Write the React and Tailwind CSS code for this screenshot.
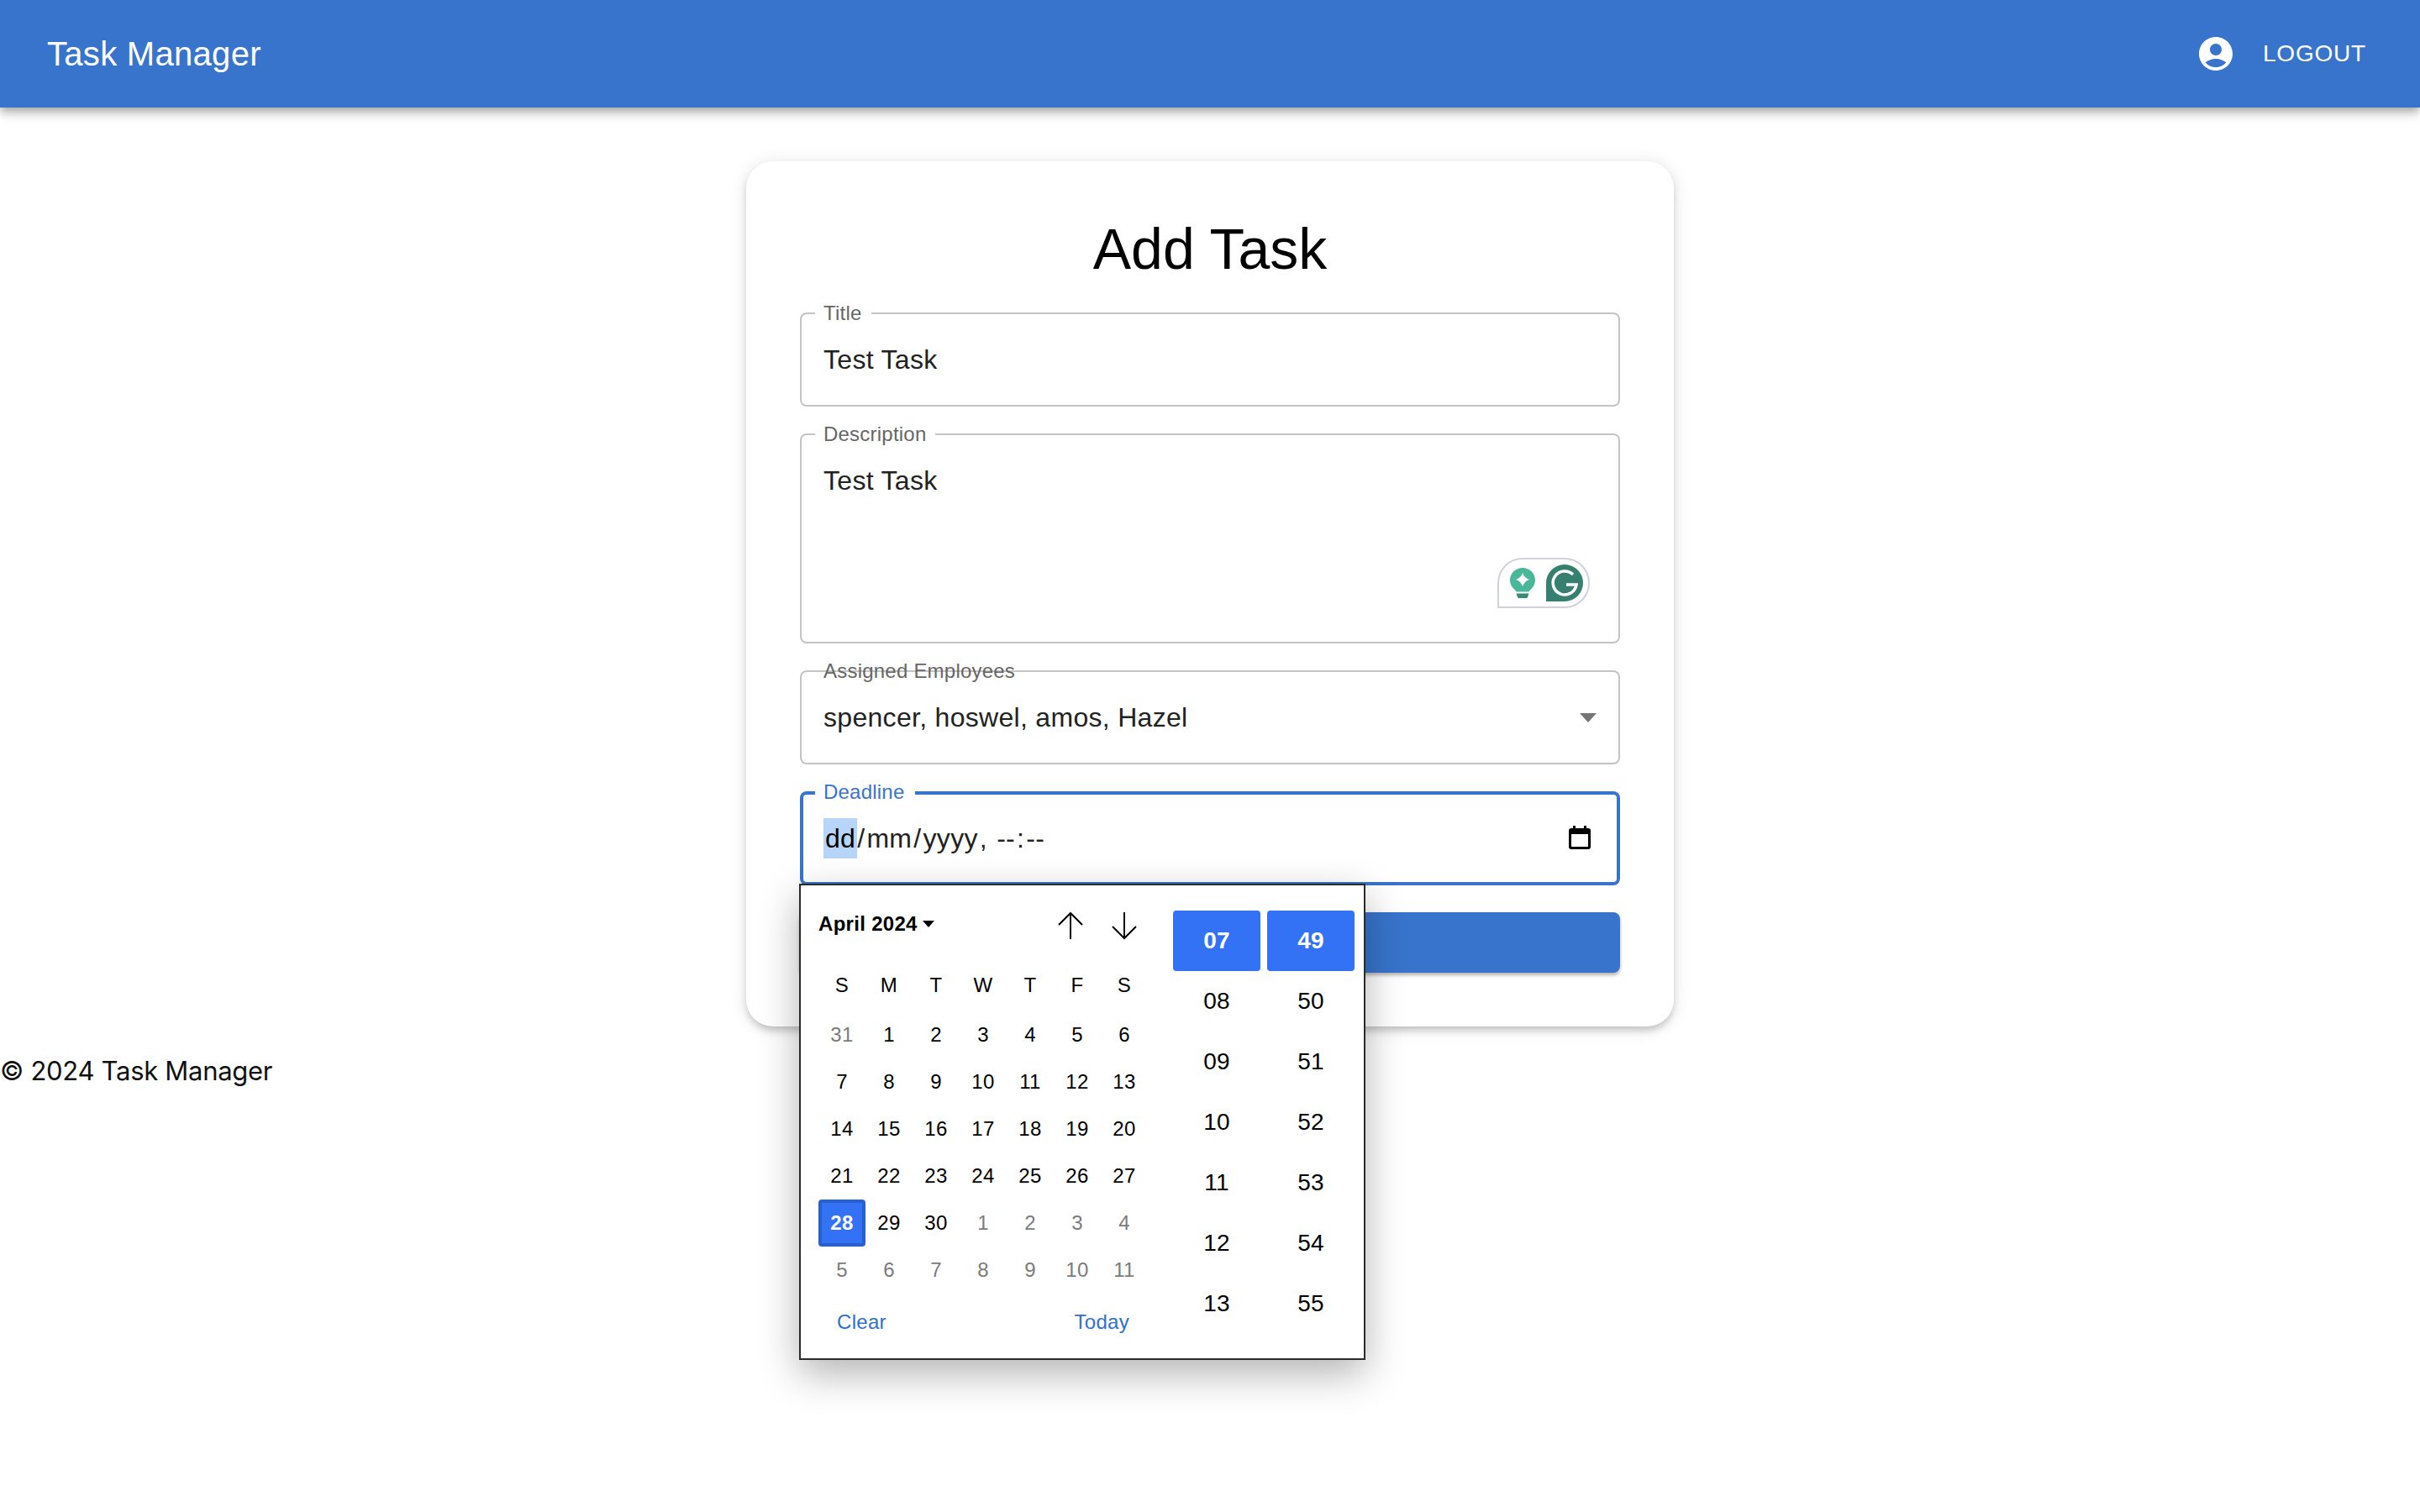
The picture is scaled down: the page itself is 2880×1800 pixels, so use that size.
const calendarRows = [
  [["31", true], ["1"], ["2"], ["3"], ["4"], ["5"], ["6"]],
  [["7"], ["8"], ["9"], ["10"], ["11"], ["12"], ["13"]],
  [["14"], ["15"], ["16"], ["17"], ["18"], ["19"], ["20"]],
  [["21"], ["22"], ["23"], ["24"], ["25"], ["26"], ["27"]],
  [["28"], ["29"], ["30"], ["1", true], ["2", true], ["3", true], ["4", true]],
  [["5", true], ["6", true], ["7", true], ["8", true], ["9", true], ["10", true], ["11", true]],
];

const weekDays = ["S", "M", "T", "W", "T", "F", "S"];
const hours = ["07", "08", "09", "10", "11", "12", "13"];
const minutes = ["49", "50", "51", "52", "53", "54", "55"];

function AccountIcon() {
  return (
    <svg viewBox="0 0 24 24" className="h-12 w-12 fill-white">
      <path d="M12 2C6.48 2 2 6.48 2 12s4.48 10 10 10 10-4.48 10-10S17.52 2 12 2zm0 4c1.93 0 3.5 1.57 3.5 3.5S13.93 13 12 13s-3.5-1.57-3.5-3.5S10.07 6 12 6zm0 14c-2.03 0-4.43-.82-6.14-2.88C7.55 15.8 9.68 15 12 15s4.45.8 6.14 2.12C16.43 19.18 14.03 20 12 20z" />
    </svg>
  );
}

function GrammarlyBadge() {
  return (
    <div className="absolute bottom-[40px] right-[34px] flex h-[60px] w-[110px] items-center rounded-[30px] rounded-bl-none border-2 border-[#cfd1e0] bg-white pl-[13px]">
      <svg viewBox="0 0 30 36" className="h-[36px] w-[30px]">
        <path d="M15 0C6.7 0 0 6.5 0 14.6c0 5 2.6 9 6 11.8.8.7 1.2 1.2 1.4 2h15.2c.2-.8.6-1.3 1.4-2 3.4-2.8 6-6.8 6-11.800C30 6.500 23.300 0 15 0z" fill="#4ab79b" />
        <path d="M15 6Q17 12 23 14 17 16 15 22 13 16 7 14 13 12 15 6z" fill="#fff" />
        <path d="M7.500 30.500h15l-1.500 4.500a1.500 1.500 0 0 1-1.400 1H10.400a1.500 1.500 0 0 1-1.400-1z" fill="#3b8a76" />
      </svg>
      <svg viewBox="0 0 44 44" className="ml-[13px] h-[44px] w-[44px]">
        <path d="M22 0a22 22 0 0 1 0 44H0V22A22 22 0 0 1 22 0z" fill="#377f6f" />
        <path d="M32 12A14 14 0 1 0 36 24H24" fill="none" stroke="#fff" strokeWidth="3.500" />
      </svg>
    </div>
  );
}

function OutlinedField({ label, className, children }) {
  return (
    <div className={`relative rounded-lg border-2 border-[#c4c4c4] ${className}`}>
      <span className="absolute left-[16px] top-[-17px] bg-white pl-[10px] pr-[11px] text-[24px] leading-[32px] tracking-[0.22px] text-[#666666]">
        {label}
      </span>
      {children}
    </div>
  );
}

function CalendarPopup() {
  return (
    <div className="absolute left-[-5px] top-[106px] z-10 flex h-[567px] w-[674px] border-2 border-[#2b2b2b] bg-white pl-[21px] pt-[30px] text-black shadow-[0_16px_44px_rgba(0,0,0,0.3)]">
      <div className="w-[392px]">
        <div className="flex h-[32px] items-center justify-between pr-[12px]">
          <div className="flex items-center gap-[6px] text-[24px] font-bold">
            <span>April 2024</span>
            <svg viewBox="0 0 14 8" className="h-[8px] w-[14px] fill-black">
              <path d="M0 0h14L7 8z" />
            </svg>
          </div>
          <div className="flex gap-[32px]">
            <svg viewBox="0 0 32 32" className="h-[32px] w-[32px] overflow-visible fill-none stroke-black stroke-2">
              <path d="M16 34V3M2 17 16 3l14 14" />
            </svg>
            <svg viewBox="0 0 32 32" className="h-[32px] w-[32px] overflow-visible fill-none stroke-black stroke-2">
              <path d="M16 2v31M2 19l14 14 14-14" />
            </svg>
          </div>
        </div>
        <div className="mt-[29px] grid grid-cols-7 text-[24px]">
          {weekDays.map((day, index) => (
            <div key={index} className="flex h-[56px] items-center justify-center">
              {day}
            </div>
          ))}
        </div>
        <div className="mt-[3px] grid grid-cols-7 text-[24px]">
          {calendarRows.flat().map(([day, muted], index) =>
            day === "28" ? (
              <div
                key={index}
                className="flex h-[56px] items-center justify-center rounded border-4 border-[#2a60cc] bg-[#3371f5] font-bold text-white"
              >
                {day}
              </div>
            ) : (
              <div
                key={index}
                className={`flex h-[56px] items-center justify-center ${muted ? "text-[#7b7b7b]" : "text-black"}`}
              >
                {day}
              </div>
            )
          )}
        </div>
        <div className="mt-[18px] flex h-[32px] items-center justify-between pl-[22px] pr-[22px] text-[24px] text-[#2f6fd0]">
          <span>Clear</span>
          <span>Today</span>
        </div>
      </div>
      <div className="ml-[30px] flex gap-[8px] text-[28px]">
        {[hours, minutes].map((column, columnIndex) => (
          <div key={columnIndex} className="w-[104px]">
            {column.map((value, index) => (
              <div
                key={value}
                className={
                  index === 0
                    ? "flex h-[72px] items-center justify-center rounded bg-[#3371f5] font-bold text-white"
                    : "flex h-[72px] items-center justify-center text-black"
                }
              >
                {value}
              </div>
            ))}
          </div>
        ))}
      </div>
    </div>
  );
}

export default function App() {
  return (
    <div className="min-h-screen bg-white font-['Liberation_Sans',sans-serif]">
      <header className="flex h-[128px] items-center justify-between bg-[#3874cb] pl-[56px] pr-[64px] text-white shadow-[0_4px_8px_-2px_rgba(0,0,0,0.2),0_8px_10px_rgba(0,0,0,0.14),0_2px_20px_rgba(0,0,0,0.12)]">
        <div className="text-[40px] tracking-[0.3px]">Task Manager</div>
        <div className="flex items-center gap-[32px]">
          <AccountIcon />
          <span className="text-[28px] tracking-[0.8px]">LOGOUT</span>
        </div>
      </header>

      <main className="flex justify-center pt-[64px]">
        <div className="w-[1104px] rounded-[32px] bg-white px-[64px] pb-[64px] pt-[64px] shadow-[0_6px_10px_-2px_rgba(0,0,0,0.2),0_2px_20px_rgba(0,0,0,0.12)]">
          <h1 className="h-[85px] text-center text-[68px] leading-[80px] text-black">Add Task</h1>
          <div className="mt-[31px] flex flex-col gap-[32px] text-[32px] tracking-[0.3px] text-[#222222]">
            <OutlinedField label="Title" className="flex h-[112px] items-center pl-[26px]">
              Test Task
            </OutlinedField>

            <OutlinedField label="Description" className="h-[250px] pl-[26px] pt-[30px]">
              Test Task
              <GrammarlyBadge />
            </OutlinedField>

            <div className="relative flex h-[112px] items-center rounded-lg border-2 border-[#c4c4c4] pl-[26px]">
              <span className="absolute left-[26px] top-[-17px] text-[24px] leading-[32px] tracking-[0.22px] text-[#666666]">
                Assigned Employees
              </span>
              spencer, hoswel, amos, Hazel
              <svg viewBox="0 0 20 11" className="absolute right-[26px] top-[49px] h-[11px] w-[20px] fill-[#757575]">
                <path d="M0 0h20L10 11z" />
              </svg>
            </div>

            <div className="relative flex h-[112px] items-center rounded-lg border-4 border-[#3874cb] pl-[24px]">
              <span className="absolute left-[14px] top-[-19px] bg-white pl-[10px] pr-[12px] text-[24px] leading-[32px] tracking-[0.22px] text-[#3874cb]">
                Deadline
              </span>
              <span className="bg-[#b7d4f9] px-[2px] text-black">dd</span>
              <span>/</span>
              <span className="px-[2px]">mm</span>
              <span>/</span>
              <span className="px-[2px]">yyyy</span>
              <span>,&nbsp;</span>
              <span className="px-[2px]">--</span>
              <span>:</span>
              <span className="px-[2px]">--</span>
              <svg viewBox="0 0 26 28" className="absolute right-[31px] top-[37px] h-[28px] w-[26px]">
                <path d="M5 0h3v3h10V0h3v3h2a3 3 0 0 1 3 3v19a3 3 0 0 1-3 3H3a3 3 0 0 1-3-3V6a3 3 0 0 1 3-3h2zM3 10v15h20V10z" fill="#000" fillRule="evenodd" />
              </svg>
              <CalendarPopup />
            </div>

            <div className="h-[72px] rounded-lg bg-[#3874cb] shadow-[0_3px_4px_rgba(0,0,0,0.3)]" />
          </div>
        </div>
      </main>

      <footer className="mt-[33px] font-['Inter',sans-serif] text-[31px] leading-[40px] tracking-[-0.3px] text-[#111111]">© 2024 Task Manager</footer>
    </div>
  );
}
